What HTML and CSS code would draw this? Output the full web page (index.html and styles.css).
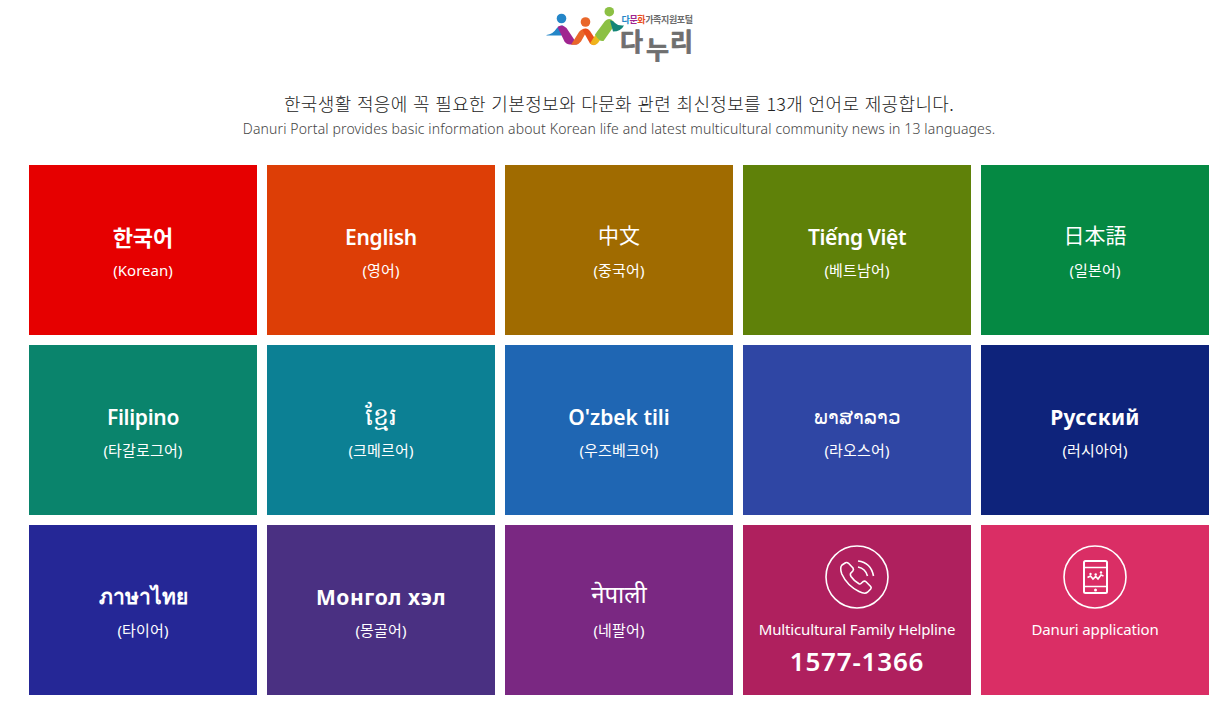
FILE: index.html
```
<!DOCTYPE html>
<html lang="ko">

<head>
    <meta charset="UTF-8">
    <meta name="viewport" content="width=device-width, initial-scale=1.0">
    <title>다문화가족지원포털 다누리</title>
    <link rel="stylesheet" href="styles.css">
</head>

<body>
    <!-- Header Section -->
    <header class="header">
        <h1 class="logo">
            <svg width="150" height="60" viewBox="544 4 150 60">
                <defs>
                    <linearGradient id="leg-yellow" x1="0" y1="1" x2="1" y2="0">
                        <stop offset="0" stop-color="#f6a81c"/>
                        <stop offset="1" stop-color="#d9d51d"/>
                    </linearGradient>
                </defs>
                <path d="M546.500 35 Q553 34 556.500 28.500 Q559 25 563 25.500 L566 30 L561.500 35.500 H546.500Z" fill="#2486c8"/>
                <path d="M557.500 27 Q562 23.500 566.500 28 L577.500 44.500 H570 Q566.500 44.500 564.500 41.500Z" fill="#a02590"/>
                <path d="M571 44.800 L579 32 Q583 27 588 29 L581 41.500 Q578.500 45 575 44.800Z" fill="#e9672a"/>
                <path d="M582.500 30 Q587 27 590 31 L597.500 42.500 Q594.500 46.500 590 43.500Z" fill="#e94e1b"/>
                <path d="M590 43.500 L598.500 30 L605 33 L598 43 Q594.500 47 590 43.500Z" fill="url(#leg-yellow)"/>
                <path d="M595 34.500 L605 21 Q609.500 17 613.500 21.500 L615.500 24 L603.500 41 Q599 42 595 34.500Z" fill="#8cc044"/>
                <path d="M610 20.500 Q613 20 615 23 Q618 26 624 25.500 Q621 31.500 613 31.500Z" fill="#138577"/>
                <circle cx="561.500" cy="18.500" r="4.800" fill="#2486c8"/>
                <circle cx="585.500" cy="22" r="4.800" fill="#e9672a"/>
                <circle cx="609.300" cy="11.700" r="4.800" fill="#8cc044"/>
                <text class="logo-sub" x="621.500" y="23" textLength="71.500"><tspan fill="#2486c8">다</tspan><tspan fill="#a02590">문</tspan><tspan fill="#e94e1b">화</tspan>가족지원포털</text>
                <text class="logo-name" x="620 646 670" y="50.500 59 50.500">다누리</text>
            </svg>
        </h1>
        <p class="intro-ko">한국생활 적응에 꼭 필요한 기본정보와 다문화 관련 최신정보를 13개 언어로 제공합니다.</p>
        <p class="intro-en">Danuri Portal provides basic information about Korean life and latest multicultural community news in 13 languages.</p>
    </header>

    <!-- Language List -->
    <main class="lang-list">
        <a class="tile ko"><strong>한국어</strong><span>(Korean)</span></a>
        <a class="tile en"><strong>English</strong><span>(영어)</span></a>
        <a class="tile zh"><strong>中文</strong><span>(중국어)</span></a>
        <a class="tile vi"><strong>Tiếng Việt</strong><span>(베트남어)</span></a>
        <a class="tile ja"><strong>日本語</strong><span>(일본어)</span></a>
        <a class="tile tl"><strong>Filipino</strong><span>(타갈로그어)</span></a>
        <a class="tile km"><strong>ខ្មែរ</strong><span>(크메르어)</span></a>
        <a class="tile uz"><strong>O'zbek tili</strong><span>(우즈베크어)</span></a>
        <a class="tile lo"><strong>ພາສາລາວ</strong><span>(라오스어)</span></a>
        <a class="tile ru"><strong>Русский</strong><span>(러시아어)</span></a>
        <a class="tile th"><strong>ภาษาไทย</strong><span>(타이어)</span></a>
        <a class="tile mn"><strong>Монгол хэл</strong><span>(몽골어)</span></a>
        <a class="tile ne"><strong>नेपाली</strong><span>(네팔어)</span></a>
        <a class="tile helpline">
            <svg class="icon" width="64" height="64" viewBox="0 0 64 64">
                <circle cx="32" cy="32" r="31"/>
                <path d="M17 20 L20.500 17.800 Q22 17 23.500 18.300 L28 23 Q29 24.500 27.800 26 L25.500 28.500 Q25 29.800 26 31.500 Q29 36 34 38.800 Q35.200 39.300 36 38.500 L38.300 36.500 Q39.700 35.500 41 36.800 L45.700 41.500 Q46.700 42.800 45.700 44 L42.500 47.200 Q40 49.500 34 46.500 Q22 40.500 16.800 29 Q14.500 22.500 17 20Z"/>
                <path d="M33 16 Q46 17.500 48.500 31 M33 22 Q40.500 23.500 42.500 31"/>
            </svg>
            <span>Multicultural Family Helpline</span>
            <strong>1577-1366</strong>
        </a>
        <a class="tile app">
            <svg class="icon" width="64" height="64" viewBox="0 0 64 64">
                <circle cx="32" cy="32" r="31"/>
                <rect class="phone" x="21" y="16" width="23" height="32" rx="1.500"/>
                <path d="M21 22.500 H44 M21 41.500 H44"/>
                <path d="M24.500 32.500 L27.500 31 L30 34 L32.700 31.500 L35 34 L38 30 L40.500 31"/>
                <g class="dots">
                    <circle cx="27.500" cy="29" r="1.200"/>
                    <circle cx="32.700" cy="29.500" r="1.200"/>
                    <circle cx="38" cy="27.500" r="1.200"/>
                    <circle cx="32.500" cy="45" r="1.500"/>
                </g>
            </svg>
            <span>Danuri application</span>
        </a>
    </main>
</body>

</html>
```
FILE: styles.css
```
/* Base Styles */
body {
    margin: 0;
    padding: 4px 16px 0 29px;
    background-color: #ffffff;
    color: #333333;
    font-family: "Noto Sans", "Noto Sans CJK KR", sans-serif;
}

/* Header Styles */
.header {
    height: 161px;
    text-align: center;
    white-space: nowrap;
}

.logo {
    height: 60px;
    margin: 0 0 25px;
}

.logo svg {
    display: block;
    margin: 0 auto;
    overflow: visible;
}

.logo-sub {
    font-family: "Noto Sans CJK KR", sans-serif;
    font-size: 9px;
    font-weight: 700;
    fill: #6b6b6b;
}

.logo-name {
    font-family: "Noto Sans CJK KR", sans-serif;
    font-size: 25px;
    font-weight: 700;
    fill: #6f6f6f;
    stroke: #6f6f6f;
    stroke-width: 0.7;
    stroke-linejoin: round;
}

.intro-ko {
    margin: 0;
    color: #222222;
    font-family: "Noto Sans CJK KR", sans-serif;
    font-size: 18px;
    font-weight: 300;
    letter-spacing: 0.34px;
    line-height: 28px;
}

.intro-en {
    margin: 0;
    color: #444444;
    font-size: 14px;
    font-weight: 300;
    letter-spacing: 0.14px;
    line-height: 23px;
}

/* Language Tiles */
.lang-list {
    display: grid;
    grid-template-columns: repeat(5, 228px);
    grid-auto-rows: 170px;
    gap: 10px;
}

.tile {
    display: flex;
    flex-direction: column;
    align-items: center;
    box-sizing: border-box;
    padding-top: 57px;
    color: #ffffff;
    white-space: nowrap;
}

.tile strong {
    font-size: 21px;
    font-weight: 600;
    line-height: 30px;
}

.tile span {
    margin-top: 8px;
    font-size: 15px;
    letter-spacing: 0.15px;
    line-height: 20px;
}

.ko { background-color: #e60000; }
.en { background-color: #dd3e06; }
.zh { background-color: #a06b00; }
.vi { background-color: #5f8109; }
.ja { background-color: #058943; }
.tl { background-color: #0a846c; }
.km { background-color: #0c8094; }
.uz { background-color: #1f66b3; }
.lo { background-color: #2f46a4; }
.ru { background-color: #0e237b; }
.th { background-color: #252796; }
.mn { background-color: #4a3082; }
.ne { background-color: #7a2882; }
.helpline { background-color: #af205e; }
.app { background-color: #da2e65; }

.ko strong {
    font-size: 22px;
}

.ko span {
    letter-spacing: 0;
}

.en strong,
.tl strong {
    letter-spacing: -0.3px;
}

.vi strong {
    letter-spacing: -0.4px;
}

.ru strong {
    font-weight: 700;
    letter-spacing: 0.3px;
}

.mn strong {
    font-weight: 700;
    letter-spacing: 0.6px;
}

.zh,
.ja,
.ne {
    padding-top: 54px;
}

.zh span,
.ja span,
.ne span {
    margin-top: 11px;
}

.zh strong {
    font-family: "Noto Sans CJK SC", sans-serif;
    font-weight: 400;
}

.ja strong {
    font-family: "Noto Sans CJK JP", sans-serif;
    font-weight: 400;
}

.km strong,
.lo strong,
.ne strong {
    font-weight: 400;
}

.km {
    padding-top: 55px;
}

.km strong {
    font-size: 25px;
}

.km span {
    margin-top: 10px;
}

.lo strong {
    font-size: 20px;
}

.ne strong {
    font-size: 24px;
}

.th {
    padding-top: 56px;
}

.th span {
    margin-top: 9px;
}

/* Helpline and App */
.helpline,
.app {
    padding-top: 20px;
}

.icon {
    fill: none;
    stroke: #ffffff;
    stroke-width: 1.6;
}

.icon .phone {
    stroke-width: 2;
}

.icon .dots {
    fill: #ffffff;
    stroke: none;
}

.helpline span,
.app span {
    margin-top: 10px;
    letter-spacing: -0.15px;
}

.helpline strong {
    margin-top: 6px;
    font-size: 26px;
    letter-spacing: 0.8px;
    line-height: 32px;
}
```
